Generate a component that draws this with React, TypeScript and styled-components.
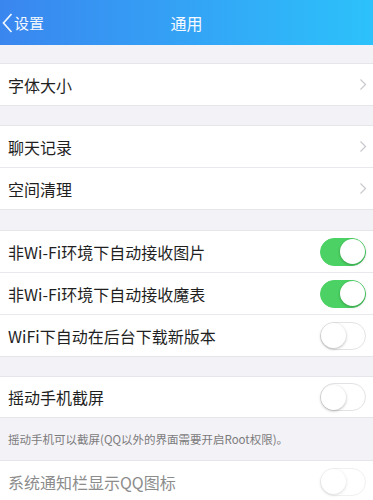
import React from "react";
import styled, { createGlobalStyle } from "styled-components";

const Global = createGlobalStyle`
  html, body { margin: 0; padding: 0; background: #f3f2f7; }
  body { font-family: "Noto Sans CJK SC", "Noto Sans", sans-serif; }
`;

const Page = styled.div`
  width: 373px;
  height: 500px;
  overflow: hidden;
  background: #f3f2f7;
  display: flex;
  flex-direction: column;
`;

const Header = styled.div`
  height: 45px;
  flex: none;
  background: linear-gradient(90deg, #3a86ef 0%, #33a6f6 55%, #2cc2fb 100%);
  display: grid;
  grid-template-columns: 1fr auto 1fr;
  align-items: center;
  color: #fff;
`;

const Back = styled.div`
  display: flex;
  align-items: center;
  gap: 1px;
  padding-left: 1px;
  font-size: 15px;
  color: #f2f8ff;
`;

const Title = styled.div`
  font-size: 16px;
  color: #f4f9ff;
`;

const Group = styled.div<{ $top: number }>`
  margin-top: ${(p) => p.$top}px;
  background: #fff;
  border-top: 1px solid #e6e5ea;
  border-bottom: 1px solid #e6e5ea;
  display: flex;
  flex-direction: column;
  flex: none;
`;

const Row = styled.div<{ $h?: number; $muted?: boolean }>`
  height: ${(p) => p.$h ?? 41}px;
  display: flex;
  align-items: center;
  padding: 0 7px 0 8px;
  font-size: 16px;
  color: ${(p) => (p.$muted ? "#8c8c8c" : "#1f1f1f")};
  & + & {
    border-top: 1px solid #e9e8ed;
  }
`;

const Label = styled.span`
  flex: 1;
`;

const Note = styled.div`
  height: 42px;
  flex: none;
  padding: 0 8px;
  display: flex;
  align-items: center;
  font-size: 11.5px;
  color: #7b7b7b;
`;

const Track = styled.div<{ $on: boolean; $faint?: boolean }>`
  width: 46px;
  height: 28px;
  border-radius: 14px;
  box-sizing: border-box;
  background: ${(p) => (p.$on ? "#4cd264" : "#fff")};
  border: 1.5px solid ${(p) => (p.$on ? "#4cd264" : "#e3e3e6")};
  display: flex;
  align-items: center;
  justify-content: ${(p) => (p.$on ? "flex-end" : "flex-start")};
  opacity: ${(p) => (p.$faint ? 0.5 : 1)};
`;

const Knob = styled.div`
  width: 25px;
  height: 25px;
  border-radius: 50%;
  background: #fff;
  box-shadow: 0 1px 3px rgba(0, 0, 0, 0.28);
`;

const ChevronBox = styled.svg`
  margin-right: -1px;
`;

const Chevron = () => (
  <ChevronBox width="8" height="13" viewBox="0 0 8 13">
    <path d="M1.5 1.5 L6.5 6.5 L1.5 11.5" fill="none" stroke="#c8c8cd" strokeWidth="1.2" />
  </ChevronBox>
);

const BackIcon = () => (
  <svg width="12" height="22" viewBox="0 0 12 22">
    <path d="M10.5 2 L2.5 11 L10.5 20" fill="none" stroke="#eef6ff" strokeWidth="1.7" />
  </svg>
);

const Toggle = ({ on, faint }: { on: boolean; faint?: boolean }) => (
  <Track $on={on} $faint={faint}>
    <Knob />
  </Track>
);

export default function App() {
  return (
    <Page>
      <Global />
      <Header>
        <Back>
          <BackIcon />
          <span>设置</span>
        </Back>
        <Title>通用</Title>
        <div />
      </Header>
      <Group $top={18}>
        <Row>
          <Label>字体大小</Label>
          <Chevron />
        </Row>
      </Group>
      <Group $top={19}>
        <Row>
          <Label>聊天记录</Label>
          <Chevron />
        </Row>
        <Row>
          <Label>空间清理</Label>
          <Chevron />
        </Row>
      </Group>
      <Group $top={20}>
        <Row>
          <Label>非Wi-Fi环境下自动接收图片</Label>
          <Toggle on />
        </Row>
        <Row>
          <Label>非Wi-Fi环境下自动接收魔表</Label>
          <Toggle on />
        </Row>
        <Row>
          <Label>WiFi下自动在后台下载新版本</Label>
          <Toggle on={false} />
        </Row>
      </Group>
      <Group $top={19}>
        <Row $h={40}>
          <Label>摇动手机截屏</Label>
          <Toggle on={false} />
        </Row>
      </Group>
      <Note>摇动手机可以截屏(QQ以外的界面需要开启Root权限)。</Note>
      <Group $top={0}>
        <Row $muted>
          <Label>系统通知栏显示QQ图标</Label>
          <Toggle on={false} faint />
        </Row>
      </Group>
    </Page>
  );
}
